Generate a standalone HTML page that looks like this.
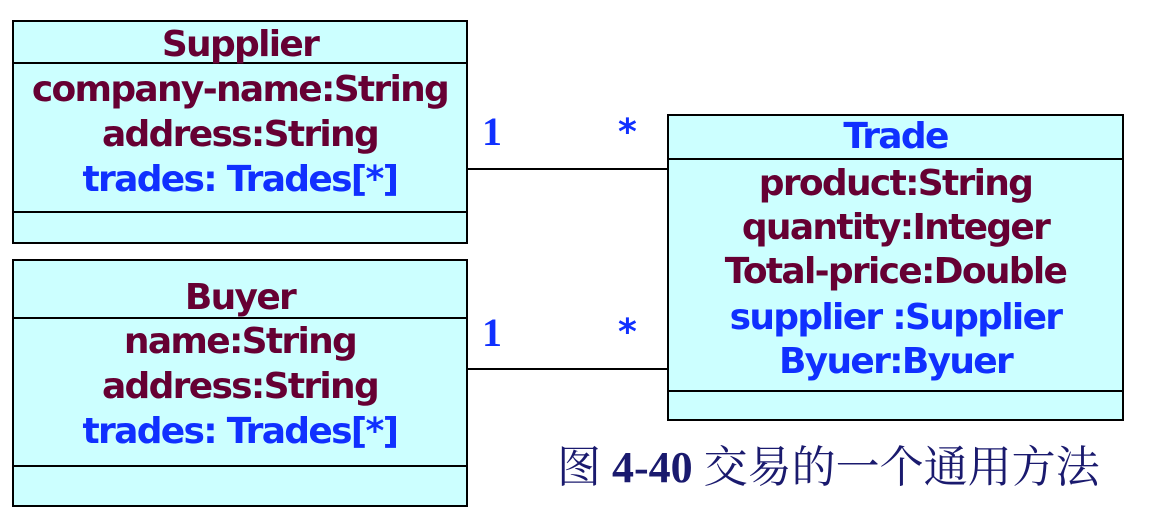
<!DOCTYPE html>
<html><head><meta charset="utf-8"><style>
body{margin:0;width:1166px;height:528px;background:#fff;position:relative;overflow:hidden;font-family:"DejaVu Sans","Liberation Sans",sans-serif;}
.box{position:absolute;background:#ccffff;border:2px solid #000;box-sizing:border-box;}
.hl{position:absolute;left:0;right:0;height:0;border-top:2px solid #000;}
.t{position:absolute;left:0;right:0;text-align:center;font-weight:bold;font-size:36px;letter-spacing:-1.7px;line-height:40px;color:#660033;white-space:nowrap;}
.b{color:#1030ff;}
.ln{position:absolute;height:2px;background:#000;}
.m{position:absolute;font-family:"Liberation Serif",serif;font-weight:bold;font-size:40px;color:#1030ff;line-height:40px;}
</style></head><body>
<div class="box" style="left:12px;top:20px;width:456px;height:224px;">
 <div class="hl" style="top:40px"></div><div class="hl" style="top:189px"></div>
 <div class="t" style="top:3px">Supplier</div>
 <div class="t" style="top:48px">company-name:String</div>
 <div class="t" style="top:93px">address:String</div>
 <div class="t b" style="top:138px">trades: Trades[*]</div>
</div>
<div class="box" style="left:12px;top:259px;width:456px;height:248px;">
 <div class="hl" style="top:56px"></div><div class="hl" style="top:204px"></div>
 <div class="t" style="top:17px">Buyer</div>
 <div class="t" style="top:61px">name:String</div>
 <div class="t" style="top:106px">address:String</div>
 <div class="t b" style="top:151px">trades: Trades[*]</div>
</div>
<div class="box" style="left:667px;top:114px;width:457px;height:307px;">
 <div class="hl" style="top:42px"></div><div class="hl" style="top:274px"></div>
 <div class="t b" style="top:1px">Trade</div>
 <div class="t" style="top:48px">product:String</div>
 <div class="t" style="top:92px">quantity:Integer</div>
 <div class="t" style="top:136px">Total-price:Double</div>
 <div class="t b" style="top:182px">supplier :Supplier</div>
 <div class="t b" style="top:226px">Byuer:Byuer</div>
</div>
<div class="ln" style="left:467px;top:168px;width:202px"></div>
<div class="ln" style="left:467px;top:368px;width:202px"></div>
<div class="m" style="left:482px;top:112px">1</div>
<div class="m" style="left:482px;top:313px">1</div>
<div class="m" style="left:618px;top:113px;font-family:'DejaVu Sans',sans-serif;font-size:36px">*</div>
<div class="m" style="left:618px;top:313px;font-family:'DejaVu Sans',sans-serif;font-size:36px">*</div>
<div style="position:absolute;left:557px;top:441px;font-size:44px;line-height:54px;color:#1a1a6e;font-family:'Liberation Serif','Noto Serif CJK SC',serif;white-space:nowrap;">图 <b>4-40</b> 交易的一个通用方法</div>
</body></html>
